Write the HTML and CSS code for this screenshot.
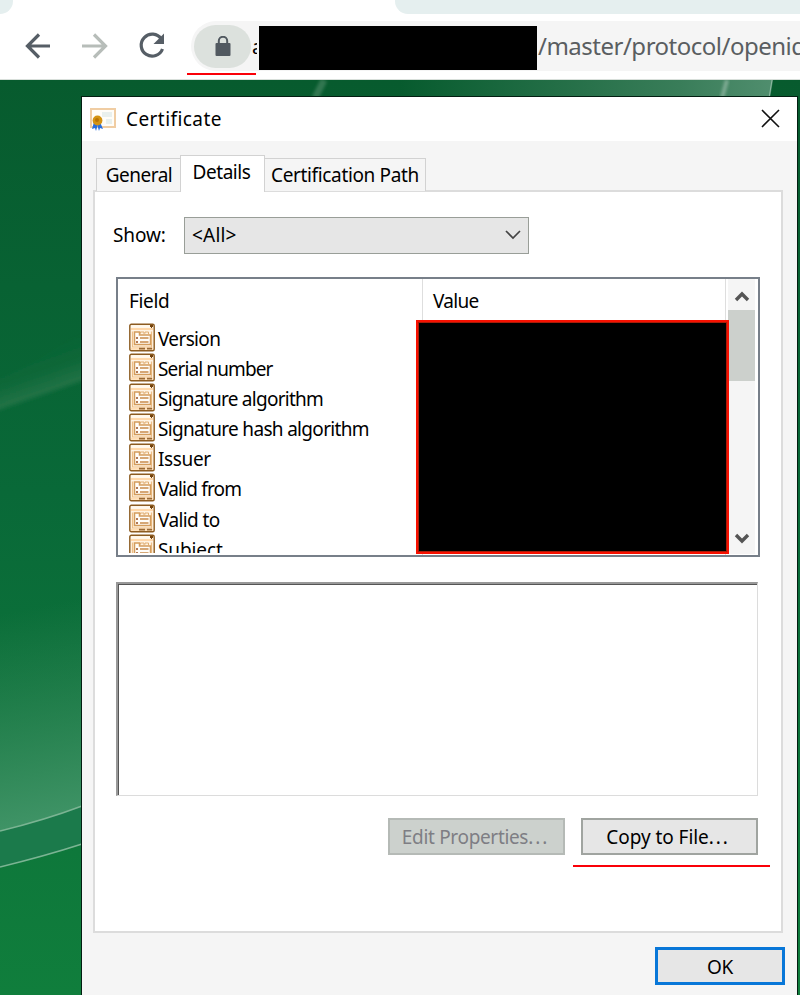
FILE: index.html
```html
<!DOCTYPE html>
<html lang="en">
<head>
<meta charset="utf-8">
<title>Certificate</title>
<link rel="stylesheet" href="styles.css">
</head>
<body>
<svg width="0" height="0" class="defs">
  <symbol id="field" viewBox="0 0 26 28">
    <rect x=".8" y=".8" width="24.4" height="26.4" rx="1.5" fill="#fff3e2" stroke="#8c5b20" stroke-width="1.4"/>
    <path d="M2 3h22" stroke="#fff8ee" stroke-width="2"/>
    <path d="M2 5.500h22" stroke="#ffd09c" stroke-width="1.6"/>
    <path d="M21 1.500h3v2h-1v1h-1v-1h-1z" fill="#74420b"/>
    <path d="M3.500 8v15.500h19V8" fill="none" stroke="#eebf87" stroke-width="1.200"/>
    <path d="M5.500 21V8.500h5v3h11V21z" fill="#fffdf9" stroke="#d39c5c" stroke-width="1.5"/>
    <path d="M11.500 10V8.500h3.500V11M16 10V8.500h3.500V11" fill="none" stroke="#dfad72"/>
    <path d="M11 14.500h8.500M11 18.500h8.500" stroke="#c88b4b" stroke-width="1.4"/>
    <path d="M7 13.700h2v1.600H7zM7 17.700h2v1.600H7z" fill="#994c1e"/>
    <path d="M2 25.200h22" stroke="#ffdcb2" stroke-width="2"/>
    <path d="M10 25.200h6M18 25.200h5" stroke="#9a6a35" stroke-width="1.800"/>
  </symbol>
</svg>
<header class="browser">
  <div class="strip"><i class="tab-left"></i><i class="tab-right"></i></div>
  <div class="toolbar">
    <svg class="nav" width="180" height="40" viewBox="0 0 180 40" fill="none" stroke="#565e66" stroke-width="3.200">
      <path d="M50 20H28M39 8.500 27.500 20 39 31.500"/>
      <path d="M82 20h23M94 8.500 105.500 20 94 31.500" stroke="#b7bdb9"/>
      <path d="M161.300 13A11 11 0 1 0 162.500 23"/>
      <path d="M164 7.500V18h-10.500z" fill="#565e66" stroke="none"/>
    </svg>
    <div class="address">
      <span class="lock"><svg width="16" height="21" viewBox="0 0 16 21"><path d="M3.800 8V5a4.200 4.200 0 0 1 8.400 0v3" fill="none" stroke="#515960" stroke-width="2"/><rect x=".5" y="7" width="15" height="13" rx="1" fill="#515960"/></svg></span>
      <span class="initial">a</span>
      <span class="redacted-host"></span>
      <span class="path">/master/protocol/openid</span>
    </div>
  </div>
  <i class="mark mark-lock"></i>
</header>
<main class="desktop">
  <svg class="wallpaper" width="800" height="915" viewBox="0 80 800 915" preserveAspectRatio="none">
    <defs>
      <linearGradient id="base" x2="0" y2="1"><stop stop-color="#075b2e"/><stop offset=".45" stop-color="#096938"/><stop offset="1" stop-color="#107e3c"/></linearGradient>
      <linearGradient id="glow" gradientUnits="userSpaceOnUse" x1="20" y1="610" x2="62" y2="822"><stop stop-color="#37875b" stop-opacity="0"/><stop offset="1" stop-color="#409467"/></linearGradient>
      <linearGradient id="topglow"><stop stop-color="#075b2e"/><stop offset=".75" stop-color="#397d59"/><stop offset="1" stop-color="#508e6e"/></linearGradient>
      <linearGradient id="swoosh" gradientUnits="userSpaceOnUse" x1="30" y1="350" x2="46" y2="396"><stop stop-color="#27734b" stop-opacity="0"/><stop offset=".5" stop-color="#267549" stop-opacity=".15"/><stop offset=".9" stop-color="#267549" stop-opacity=".8"/><stop offset="1" stop-color="#267549" stop-opacity="0"/></linearGradient>
      <filter id="soft" x="-50%" y="-20%" width="200%" height="140%"><feGaussianBlur stdDeviation="1.500"/></filter>
    </defs>
    <path d="M0 80h800v915H0z" fill="url(#base)"/>
    <path d="M400 80h373l-3 18H400z" fill="url(#topglow)"/>
    <path d="M727 80l-5 18" stroke="#a5c5b4" stroke-width="4" opacity=".6" filter="url(#soft)"/>
    <path d="M324 80l-9 18" stroke="#5c9272" stroke-width="7" opacity=".5" filter="url(#soft)"/>
    <path d="M772 80l-3 18" stroke="#a0c4b0" opacity=".8"/>
    <path d="M-4 380Q45 360 86 325v55Q43 404-4 420z" fill="url(#swoosh)" filter="url(#soft)"/>
    <path d="M0 600h82V806Q45 820 0 831z" fill="url(#glow)"/>
    <path d="M0 831Q45 820 82 806v38Q45 856 0 867z" fill="#1b7a4b"/>
    <path d="M0 831Q45 820 82 806M0 867Q45 856 82 844" fill="none" stroke="#7bb493" stroke-width="1.600"/>
  </svg>
  <section class="dialog">
    <div class="title">
      <svg width="28" height="24" viewBox="0 0 28 24"><rect x="2" y="2" width="24" height="18" fill="#fffdf8" stroke="#f0cda3" stroke-width="2"/><path d="M13 5h10v5H13zM17 12h6v5h-6z" fill="#e9f0ed"/><path d="m5 15-2 7 3-1 1 3 2-7zM11 15l3 7-3-1-1 3-2-7z" fill="#276ddd"/><circle cx="8.500" cy="13.500" r="4.900" fill="#d49313"/><circle cx="8" cy="13" r="2" fill="#b97405"/></svg>
      <span class="t title-text">Certificate</span>
      <svg class="close" width="20" height="20" viewBox="0 0 20 20"><path d="m1 1 17 17M18 1 1 18" stroke="#111" stroke-width="1.600"/></svg>
    </div>
    <nav class="tabs">
      <div class="tab general"><span class="t">General</span></div>
      <div class="tab details"><span class="t">Details</span></div>
      <div class="tab certpath"><span class="t">Certification Path</span></div>
    </nav>
    <div class="panel">
      <div class="show"><span class="t show-label">Show:</span>
        <div class="select"><span class="t">&lt;All&gt;</span><svg width="16" height="10" viewBox="0 0 16 10"><path d="m1 1 7 7 7-7" fill="none" stroke="#444" stroke-width="1.700"/></svg></div>
      </div>
      <div class="list">
        <div class="fields">
          <div class="heading t">Field</div>
          <div class="row"><svg><use href="#field"/></svg><span class="t version">Version</span></div>
          <div class="row"><svg><use href="#field"/></svg><span class="t serial">Serial number</span></div>
          <div class="row"><svg><use href="#field"/></svg><span class="t sig">Signature algorithm</span></div>
          <div class="row"><svg><use href="#field"/></svg><span class="t hash">Signature hash algorithm</span></div>
          <div class="row"><svg><use href="#field"/></svg><span class="t issuer">Issuer</span></div>
          <div class="row"><svg><use href="#field"/></svg><span class="t from">Valid from</span></div>
          <div class="row"><svg><use href="#field"/></svg><span class="t to">Valid to</span></div>
          <div class="row"><svg><use href="#field"/></svg><span class="t subject">Subject</span></div>
        </div>
        <div class="values"><div class="heading t">Value</div></div>
        <div class="scroll">
          <svg width="16" height="12" viewBox="0 0 16 12"><path d="m2 10 6-6 6 6" fill="none" stroke="#555" stroke-width="3.400"/></svg>
          <i class="thumb"></i>
          <svg class="down" width="16" height="12" viewBox="0 0 16 12"><path d="m2 2 6 6 6-6" fill="none" stroke="#555" stroke-width="3.400"/></svg>
        </div>
        <div class="redacted-values"></div>
      </div>
      <div class="output"></div>
      <div class="actions">
        <div class="button disabled"><span class="t edit">Edit Properties<span class="dots">...</span></span></div>
        <div class="button"><span class="t copy">Copy to File<span class="dots">...</span></span></div>
        <i class="mark mark-copy"></i>
      </div>
    </div>
    <div class="footer"><div class="button ok"><span class="t">OK</span></div></div>
  </section>
</main>
</body>
</html>
```
FILE: styles.css
```css
* { box-sizing: border-box; }
body { margin: 0; width: 800px; height: 995px; overflow: hidden; background: #fff; font: 20px/28px "Noto Sans", sans-serif; color: #000; }
svg { display: block; flex: none; }
.defs { position: absolute; }
.t { white-space: pre; font-size: 19px; letter-spacing: -.35px; }
.browser { position: relative; height: 80px; background: #fff; border-bottom: 1px solid #d8dfda; }
.strip { display: flex; justify-content: space-between; height: 14px; }
.tab-left { width: 13px; background: #e5efef; border-bottom-right-radius: 13px; }
.tab-right { width: 405px; background: #e5efef; border-bottom-left-radius: 13px; }
.toolbar { display: flex; padding-top: 7px; }
.nav { margin: 5px 11px 0 0; }
.address { display: flex; align-items: center; width: 609px; height: 50px; background: #f5f5f5; border-radius: 25px 0 0 25px; overflow: hidden; }
.lock { display: flex; align-items: center; justify-content: center; flex: none; width: 57px; height: 43px; margin-left: 3px; border-radius: 22px; background: #dce1dd; }
.initial { width: 5px; flex: none; overflow: hidden; margin: 2px 2px 0 1px; font-size: 20px; }
.redacted-host { width: 278px; height: 44px; margin-top: 4px; background: #000; flex: none; }
.path { font-size: 24px; letter-spacing: -.5px; margin-left: 1px; color: #5a5e61; white-space: nowrap; }
.mark { position: absolute; background: #fa0008; height: 2px; }
.mark-lock { left: 187px; top: 73px; width: 69px; }
.desktop { position: relative; height: 915px; padding: 16px 2px 0 81px; }
.wallpaper { position: absolute; left: 0; top: 0; }
.dialog { position: relative; height: 899px; border: 1px solid #031e12; border-bottom: 0; background: #f5f5f5; }
.title { display: flex; align-items: center; height: 44px; background: #fff; padding: 0 16px 0 7px; }
.title-text { margin-left: 9px; letter-spacing: .43px; }
.close { margin-left: auto; }
.tabs { display: flex; align-items: flex-end; height: 50px; margin-left: 14px; position: relative; z-index: 1; }
.tab { display: flex; align-items: center; justify-content: center; height: 33px; border: 1.5px solid #d2d2d2; border-bottom: 0; background: #f5f5f5; }
.general { width: 85px; padding-left: 1px; }
.general .t { letter-spacing: -.5px; }
.details { width: 85px; height: 37px; margin: 0 0 -1px -1px; background: #fff; padding: 0 2px 4px 0; }
.details .t { letter-spacing: -.45px; }
.certpath { width: 161px; border-left: 0; }
.panel { margin: -1px 14px 0 11px; height: 743px; border: 2px solid #dcdcdc; background: #fff; padding: 25px 22px 0; }
.show { display: flex; align-items: center; height: 37px; margin-left: -4px; }
.show-label { width: 71px; margin-top: -2px; letter-spacing: -.1px; }
.select { display: flex; align-items: center; justify-content: space-between; width: 345px; height: 37px; margin-top: -1px; border: 1.5px solid #999e98; background: #e6e6e6; padding: 0 7px 0 7px; }
.select .t { letter-spacing: .2px; }
.list { position: relative; display: flex; width: 644px; height: 280px; margin-top: 23px; margin-left: -1px; border: 2px solid #777f89; }
.fields { width: 304px; overflow: hidden; padding-left: 11px; height: 274px; }
.heading { height: 44px; padding-top: 8px; }
.values .heading { letter-spacing: -.7px; }
.row { display: flex; height: 30.1px; align-items: flex-start; }
.row svg { width: 26px; height: 29px; }
.row .t { margin: 2px 0 0 3px; }
.row .version { letter-spacing: -.65px; }
.row .serial { letter-spacing: -.87px; }
.row .sig { letter-spacing: -.73px; }
.row .hash { letter-spacing: -.68px; }
.row .from { letter-spacing: -.82px; }
.row .to { letter-spacing: -.6px; }
.row .subject { letter-spacing: -.1px; }
.values { width: 304px; border-left: 1px solid #dedede; border-right: 1px solid #dedede; padding-left: 10px; }
.scroll { display: flex; flex-direction: column; align-items: center; width: 27px; margin-left: 2px; height: 275px; background: #f5f5f5; padding: 11px 0 9px; }
.thumb { width: 27px; height: 71px; margin-top: 8px; background: #ccd0cc; }
.down { margin-top: auto; }
.redacted-values { position: absolute; left: 298px; top: 41px; width: 313px; height: 234px; background: #000; border: 2px solid #f81000; box-shadow: inset 0 0 0 1px #a81c08; }
.output { width: 642px; height: 214px; margin: 25px 0 0 -1px; border: 1px solid #dcdcdc; border-top: 2px solid #999; border-left: 2px solid #999; box-shadow: inset 1px 1px #555; }
.actions { position: relative; display: flex; justify-content: flex-end; gap: 16px; margin-top: 22px; width: 641px; }
.button { display: flex; align-items: center; justify-content: center; width: 177px; height: 37px; border: 2px solid #a0a4a0; background: #e6e6e6; }
.button .t { margin-top: 1px; }
.disabled { color: #7e7e84; background: #ccd1cd; border-color: #b5bab6; }
.edit { letter-spacing: -.33px; margin-left: -2px; }
.copy { letter-spacing: -.05px; margin-left: -3px; }
.dots { letter-spacing: 1.900px; }
.mark-copy { left: 456px; top: 47px; width: 197px; }
.footer { display: flex; justify-content: flex-end; padding: 14px 12px 0; }
.ok { width: 130px; height: 38px; border: 3px solid #0877d8; }
```
